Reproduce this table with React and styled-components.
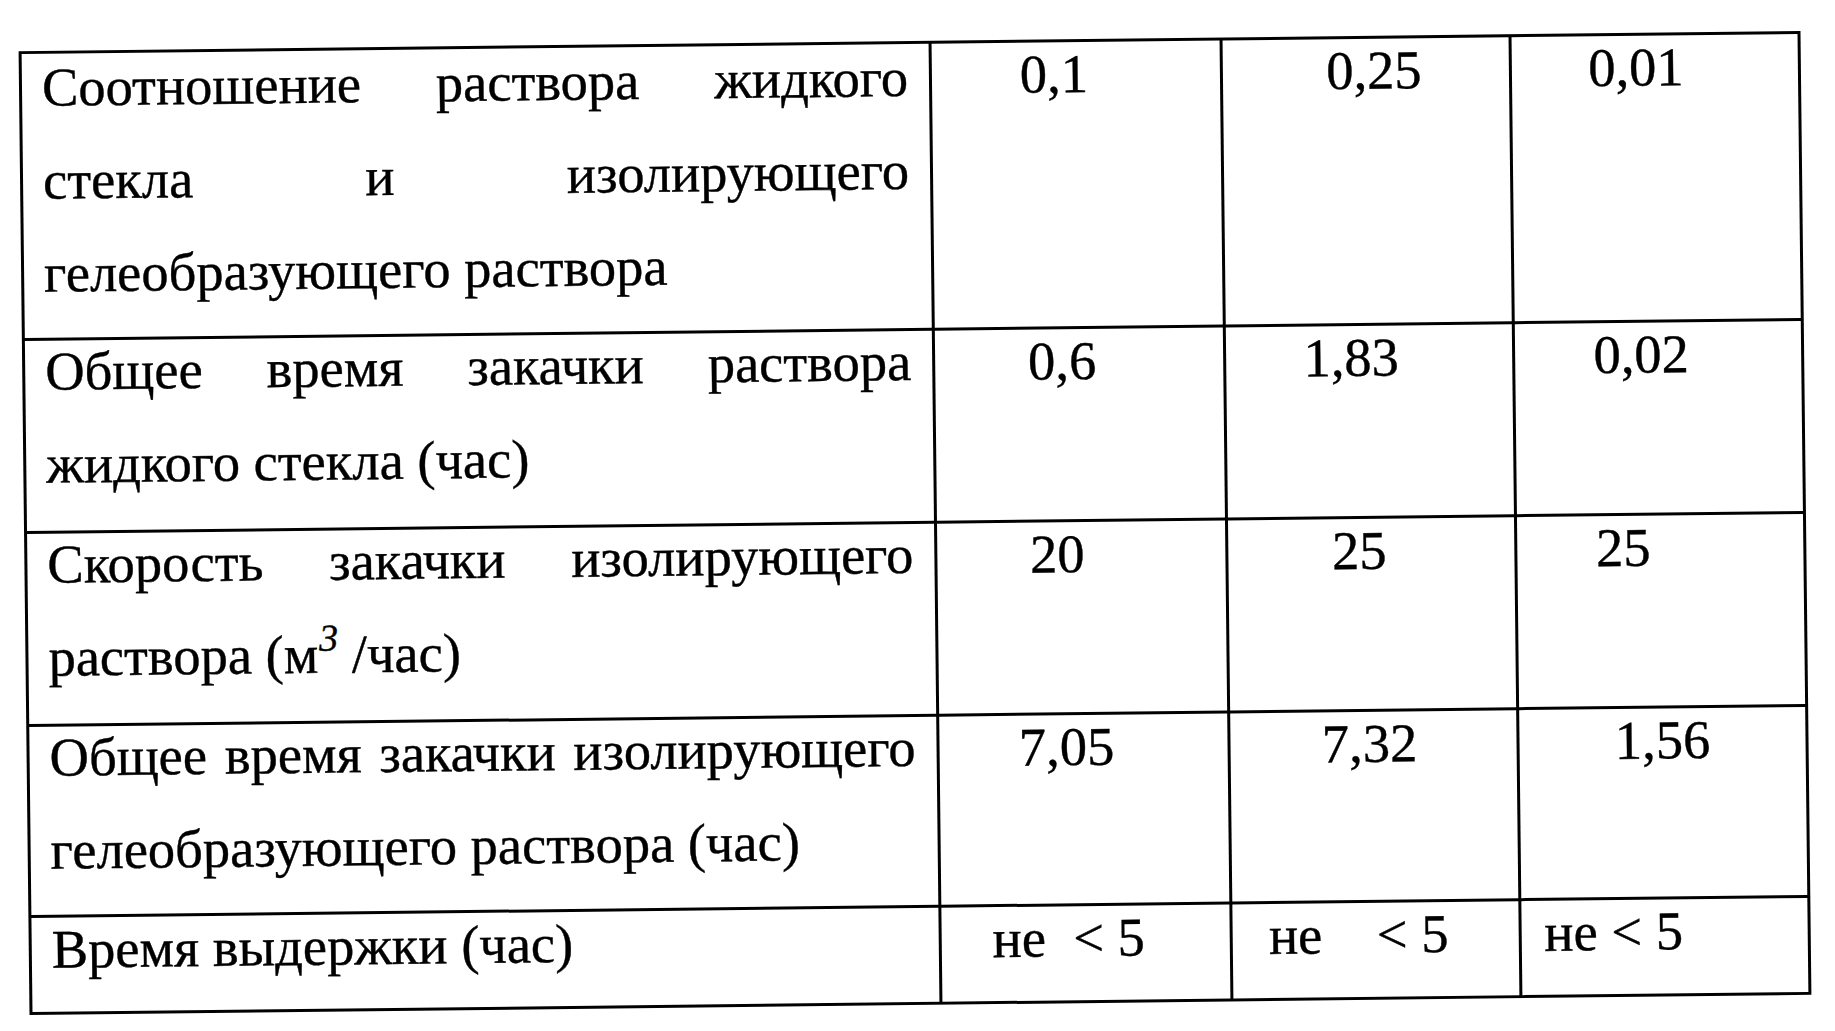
import styled, { createGlobalStyle } from "styled-components";

const GlobalStyle = createGlobalStyle`
  html, body {
    margin: 0;
    padding: 0;
    background: #ffffff;
  }
  body {
    width: 1835px;
    height: 1031px;
    overflow: hidden;
  }
`;

const Page = styled.div`
  padding: 41px 0 0 24px;
  font-family: "Liberation Serif", "Times New Roman", serif;
  font-size: 54.5px;
  color: #000;
  -webkit-text-stroke: 0.4px #000;
`;

const Table = styled.div`
  display: grid;
  grid-template-columns: 907px 288px 286px 286px;
  grid-template-rows: 284px 190px 190px 188px 94px;
  gap: 3px;
  padding: 3px;
  width: max-content;
  background: #000;
  transform: rotate(-0.65deg);
  transform-origin: 50% 50%;
`;

const LabelCell = styled.div`
  background: #fff;
  padding: 0 21px 0 20px;
  line-height: 93px;
`;

const LabelText = styled.div`
  margin-top: ${(p) => p.$top}px;
`;

const Line = styled.div`
  text-align: ${(p) => (p.$last ? "left" : "justify")};
  text-align-last: ${(p) => (p.$last ? "left" : "justify")};
  white-space: nowrap;
`;

const ValueCell = styled.div`
  background: #fff;
  line-height: 93px;
  text-align: center;
  white-space: pre;
  padding-left: ${(p) => Math.max(0, p.$shift * 2)}px;
  padding-right: ${(p) => Math.max(0, -p.$shift * 2)}px;
`;

const ValueText = styled.div`
  margin-top: -15px;
`;

const Sup = styled.sup`
  font-size: 38px;
  font-style: italic;
  vertical-align: 22px;
  line-height: 0;
  margin-left: 1px;
`;

const rows = [
  {
    top: -13,
    lines: ["Соотношение раствора жидкого", "стекла и изолирующего", "гелеобразующего раствора"],
    values: [
      ["0,1", -22],
      ["0,25", 8],
      ["0,01", -19],
    ],
  },
  {
    top: -16,
    lines: ["Общее время закачки раствора", "жидкого стекла (час)"],
    values: [
      ["0,6", -17],
      ["1,83", -18],
      ["0,02", -17],
    ],
  },
  {
    top: -16,
    lines: [
      "Скорость закачки изолирующего",
      <>
        раствора (м<Sup>3</Sup> /час)
      </>,
    ],
    values: [
      ["20", -24],
      ["25", -12],
      ["25", -37],
    ],
  },
  {
    top: -16,
    lines: ["Общее время закачки изолирующего", "гелеобразующего раствора (час)"],
    values: [
      ["7,05", -17],
      ["7,32", -4],
      ["1,56", 0],
    ],
  },
  {
    top: -15,
    lines: ["Время выдержки (час)"],
    values: [
      ["не  < 5", -17],
      ["не    < 5", -17],
      ["не < 5", -51],
    ],
  },
];

const App = () => {
  return (
    <Page>
      <GlobalStyle />
      <Table>
        {rows.map((row, i) => [
          <LabelCell key={`l${i}`}>
            <LabelText $top={row.top}>
              {row.lines.map((line, j) => (
                <Line key={j} $last={j === row.lines.length - 1}>
                  {line}
                </Line>
              ))}
            </LabelText>
          </LabelCell>,
          ...row.values.map(([v, shift], j) => (
            <ValueCell key={`v${i}${j}`} $shift={shift}>
              <ValueText>{v}</ValueText>
            </ValueCell>
          )),
        ])}
      </Table>
    </Page>
  );
};

export default App;
